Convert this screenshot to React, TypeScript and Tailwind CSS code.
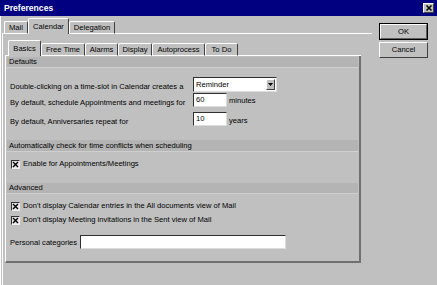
import React from "react";

const FONT = "font-['Liberation_Sans',Arial,sans-serif]";

function TopTab({ label, width, selected }: { label: string; width: string; selected?: boolean }) {
  return (
    <div
      className={`${width} ${
        selected ? "h-[16px]" : "h-[13px] border-b border-b-white"
      } flex items-center justify-center border-t border-l border-t-white border-l-white border-r border-r-[#404040] rounded-t-[2px] text-[7.6px] leading-none text-black`}
    >
      {label}
    </div>
  );
}

function Band({ label, height }: { label: string; height: string }) {
  return (
    <div className={`mx-[1px] ${height} bg-[#b4b4b4] border-b border-b-[#cfcfcf] flex items-center pl-[2px] text-[7.6px] leading-none`}>
      {label}
    </div>
  );
}

function Field({ width }: { width: string; children?: React.ReactNode }) {
  return (
    <div className={`${width} h-full bg-white border border-t-[#303030] border-l-[#303030] border-r-[#dcdcdc] border-b-[#dcdcdc]`} />
  );
}

function NumField({ value }: { value: string }) {
  return (
    <div className="w-[34px] h-full bg-white border border-t-[#303030] border-l-[#303030] border-r-[#dcdcdc] border-b-[#dcdcdc] flex items-center pl-[2px] text-[7.6px] leading-none">
      {value}
    </div>
  );
}

function CheckRow({ label, mt }: { label: string; mt: string }) {
  return (
    <div className={`${mt} h-[12px] flex items-center pl-[5px]`}>
      <div className="w-[9px] h-[9px] bg-[#e4e4e4] border border-t-[#303030] border-l-[#303030] border-r-[#f0f0f0] border-b-[#f0f0f0] flex items-center justify-center">
        <svg width="7" height="7" viewBox="0 0 7 7">
          <path d="M1 1 L6 6 M6 1 L1 6" stroke="#000" strokeWidth="1.4" />
        </svg>
      </div>
      <span className="ml-[3px] text-[7.6px] leading-none">{label}</span>
    </div>
  );
}

export default function App() {
  return (
    <div className={`${FONT} w-[437px] h-[285px] bg-[#c0c0c0] flex flex-col overflow-hidden text-black`}>
      {/* Title bar */}
      <div className="h-[16px] bg-[#000080] flex items-center justify-between pl-[4px] pr-[3px]">
        <span className="text-white font-bold text-[8.6px] leading-none">Preferences</span>
        <div className="w-[11px] h-[10px] bg-[#c0c0c0] border border-t-white border-l-white border-r-[#404040] border-b-[#404040] flex items-center justify-center">
          <svg width="6" height="6" viewBox="0 0 6 6">
            <path d="M0.5 0.5 L5.5 5.5 M5.5 0.5 L0.5 5.5" stroke="#000" strokeWidth="1.5" />
          </svg>
        </div>
      </div>

      {/* Body */}
      <div className="flex-1 flex border-l border-l-white">
        {/* Tab area */}
        <div className="ml-[1px] w-[370px] flex flex-col">
          <div className="h-[18px] flex items-end">
            <div className="w-[2px] border-b border-b-white" />
            <TopTab label="Mail" width="w-[24px]" />
            <TopTab label="Calendar" width="w-[41px]" selected />
            <TopTab label="Delegation" width="w-[46px]" />
            <div className="flex-1 border-b border-b-white" />
          </div>

          <div className="flex-1 border-l border-l-white pt-[5px]">
            <div className="ml-[2px] h-[17px] flex items-end">
              <div className="w-[3px] border-b border-b-white" />
              <TopTab label="Basics" width="w-[33px]" selected />
              <TopTab label="Free Time" width="w-[44px]" />
              <TopTab label="Alarms" width="w-[33px]" />
              <TopTab label="Display" width="w-[34px]" />
              <TopTab label="Autoprocess" width="w-[53px]" />
              <TopTab label="To Do" width="w-[33px]" />
              <div className="w-[123px] border-b border-b-white" />
            </div>

            {/* Basics panel */}
            <div className="ml-[2px] w-[356px] h-[207px] border-l border-l-white border-r-2 border-r-[#707070] border-b-2 border-b-[#707070] flex flex-col">
              <div className="mt-[1px]">
                <Band label="Defaults" height="h-[11px]" />
              </div>

              <div className="mt-[9px] h-[15px] flex items-end pl-[4px] text-[7.6px] leading-none">
                <span className="w-[183px] mb-[1px]">Double-clicking on a time-slot in Calendar creates a</span>
                <div className="w-[84px] h-full bg-white border border-t-[#303030] border-l-[#303030] border-r-[#dcdcdc] border-b-[#dcdcdc] flex items-center justify-between pl-[2px] pr-[1px]">
                  <span>Reminder</span>
                  <div className="w-[9px] h-[11px] bg-[#c0c0c0] border border-t-white border-l-white border-r-[#404040] border-b-[#404040] flex items-center justify-center">
                    <svg width="5" height="3" viewBox="0 0 5 3">
                      <path d="M0 0 H5 L2.5 3 Z" fill="#000" />
                    </svg>
                  </div>
                </div>
              </div>

              <div className="mt-[1px] h-[14px] flex items-end pl-[4px] text-[7.6px] leading-none">
                <span className="w-[183px]">By default, schedule Appointments and meetings for</span>
                <NumField value="60" />
                <span className="ml-[2px] mb-[2px]">minutes</span>
              </div>

              <div className="mt-[5px] h-[14px] flex items-end pl-[4px] text-[7.6px] leading-none">
                <span className="w-[183px]">By default, Anniversaries repeat for</span>
                <NumField value="10" />
                <span className="ml-[2px] mb-[1px]">years</span>
              </div>

              <div className="mt-[14px]">
                <Band label="Automatically check for time conflicts when scheduling" height="h-[12px]" />
              </div>
              <CheckRow label="Enable for Appointments/Meetings" mt="mt-[6px]" />

              <div className="mt-[13px]">
                <Band label="Advanced" height="h-[11px]" />
              </div>
              <CheckRow label="Don't display Calendar entries in the All documents view of Mail" mt="mt-[6px]" />
              <CheckRow label="Don't display Meeting invitations in the Sent view of Mail" mt="mt-[2px]" />

              <div className="mt-[9px] h-[14px] flex items-end pl-[4px] text-[7.6px] leading-none">
                <span className="w-[70px] mb-[2px]">Personal categories</span>
                <Field width="w-[206px]" />
              </div>
            </div>
          </div>
        </div>

        {/* Buttons */}
        <div className="ml-[7px] w-[49px] pt-[7px] flex flex-col text-[7.6px] leading-none">
          <div className="h-[17px] border border-black">
            <div className="h-full border border-t-white border-l-white border-r-[#606060] border-b-[#606060] flex items-center justify-center">
              OK
            </div>
          </div>
          <div className="mt-[2px] h-[16px] border border-t-white border-l-white border-r-[#404040] border-b-[#404040] flex items-center justify-center">
            Cancel
          </div>
        </div>
      </div>
    </div>
  );
}
